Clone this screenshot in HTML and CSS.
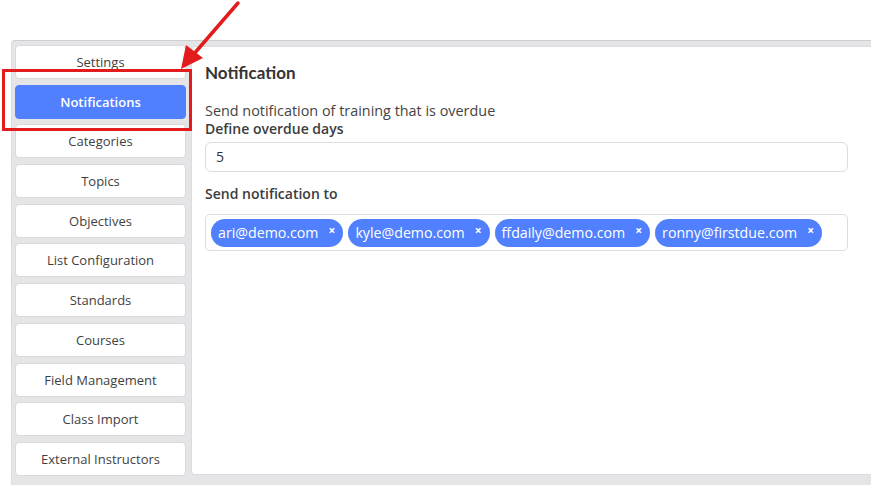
FILE: index.html
```html
<!DOCTYPE html>
<html lang="en">
<head>
    <meta charset="UTF-8">
    <meta name="viewport" content="width=device-width, initial-scale=1.0">
    <title>Settings - Notifications</title>
    <link rel="stylesheet" href="styles.css">
</head>
<body>
    <div class="frame">
        <div class="side-bar">
            <ul>
                <li>Settings</li>
                <li class="active">Notifications</li>
                <li>Categories</li>
                <li>Topics</li>
                <li>Objectives</li>
                <li>List Configuration</li>
                <li>Standards</li>
                <li>Courses</li>
                <li>Field Management</li>
                <li>Class Import</li>
                <li>External Instructors</li>
            </ul>
        </div>
        <div class="main">
            <h2>Notification</h2>
            <p class="desc">Send notification of training that is overdue</p>
            <label class="label">Define overdue days</label>
            <div class="field">5</div>
            <label class="label label-gap">Send notification to</label>
            <div class="tag-box">
                <span class="tag">ari@demo.com<i>&times;</i></span>
                <span class="tag">kyle@demo.com<i>&times;</i></span>
                <span class="tag">ffdaily@demo.com<i>&times;</i></span>
                <span class="tag">ronny@firstdue.com<i>&times;</i></span>
            </div>
        </div>
    </div>

    <!-- annotation -->
    <div class="mark-box"></div>
    <svg class="mark-arrow" width="871" height="100" viewBox="0 0 871 100">
        <line x1="238" y1="3" x2="193" y2="55" stroke="#e21c1c" stroke-width="3.5" stroke-linecap="round"/>
        <polygon points="181,69 186,45 203,58" fill="#e21c1c"/>
    </svg>
</body>
</html>
```

FILE: styles.css
```css
*{
    margin: 0;
    padding: 0;
    box-sizing: border-box;
}
li{
    list-style: none;
}
body{
    background-color: #fff;
    font-family: "Open Sans", "Liberation Sans", sans-serif;
    color: #444;
    overflow: hidden;
}
.frame{
    margin: 40px 0 0 11px;
    height: 445px;
    background-color: #e5e5e8;
    border-top: 1px solid #cfcfd3;
    border-left: 1px solid #dcdce0;
    border-top-left-radius: 4px;
    padding: 4px 0 0 3px;
    display: flex;
    gap: 5px;
}
.side-bar{
    width: 171px;
    flex-shrink: 0;
}
.side-bar ul{
    display: flex;
    flex-direction: column;
    gap: 5.7px;
}
.side-bar li{
    height: 34px;
    line-height: 32px;
    text-align: center;
    background-color: #fff;
    border: 1px solid #d9d9dc;
    border-radius: 4px;
    font-size: 13px;
    color: #3f3f3f;
}
.side-bar .active{
    background-color: #5080fd;
    border-color: #5080fd;
    color: #fff;
    font-weight: 600;
}
.main{
    flex: 1;
    height: 429px;
    margin-top: 1px;
    margin-right: -10px;
    background-color: #fff;
    border: 1px solid #dcdce0;
    border-radius: 4px 0 0 4px;
    padding: 16px 13px;
}
.main h2{
    font-family: Lato, "Open Sans", sans-serif;
    font-size: 17px;
    font-weight: 700;
    color: #333;
    line-height: 20px;
}
.desc{
    margin-top: 19px;
    font-size: 14.4px;
    line-height: 18px;
    color: #444;
}
.label{
    display: block;
    font-size: 14px;
    line-height: 18px;
    font-weight: 600;
    color: #3c3c3c;
}
.label-gap{
    margin-top: 13px;
}
.field{
    width: 643px;
    height: 30px;
    margin-top: 4px;
    border: 1px solid #dcdcdc;
    border-radius: 6px;
    padding-left: 10px;
    line-height: 28px;
    font-size: 14px;
    color: #333;
}
.tag-box{
    width: 643px;
    height: 37px;
    margin-top: 11px;
    border: 1px solid #dcdcdc;
    border-radius: 5px;
    padding: 4px 5px;
    display: flex;
    gap: 5px;
}
.tag{
    height: 28px;
    line-height: 28px;
    border-radius: 14px;
    background-color: #5080fd;
    color: #fff;
    font-size: 14.2px;
    padding: 0 8px 0 7px;
    display: flex;
    align-items: center;
}
.tag i{
    font-style: normal;
    font-size: 12px;
    font-weight: 700;
    margin-left: 10px;
    line-height: 20px;
    margin-top: -4px;
}
.mark-box{
    position: absolute;
    left: 2px;
    top: 69px;
    width: 190px;
    height: 62px;
    border: 3.5px solid #e21c1c;
}
.mark-arrow{
    position: absolute;
    left: 0;
    top: 0;
}
```
